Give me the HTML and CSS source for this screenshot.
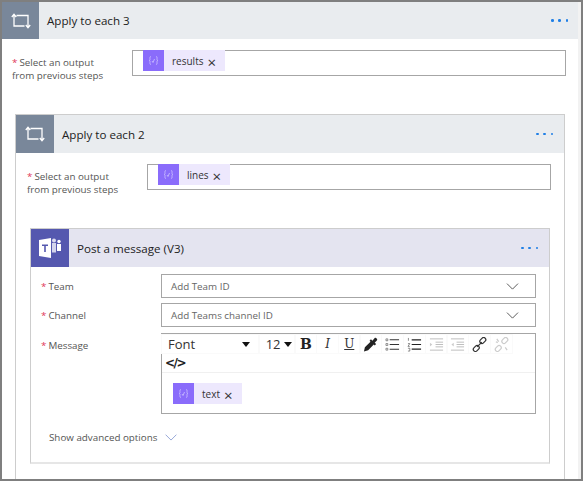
FILE: index.html
```html
<!DOCTYPE html>
<html lang="en">
<head>
<meta charset="utf-8">
<title>Apply to each</title>
<link rel="stylesheet" href="styles.css">
</head>
<body>
<svg class="defs" width="0" height="0" aria-hidden="true">
  <symbol id="loop" viewBox="0 0 20 16"><path d="M.8 4 3 1.200 5.200 4M3 1.500v11.500h10.500M5.500 2.500H17V14.500M14.800 12 17 14.800 19.200 12" fill="none" stroke="#fff" stroke-width="1.300"/></symbol>
  <symbol id="fx" viewBox="0 0 21 21"><path d="M8 6.500c-1.500 0-1 2-1 3s-1 1-1 1 1 0 1 1-.5 3 1 3M13 6.500c1.500 0 1 2 1 3s1 1 1 1-1 0-1 1 .5 3-1 3M9 11l1 1.500 1.500-3.500" fill="none" stroke="#cfc4ff" stroke-width=".8"/></symbol>
  <symbol id="chev" viewBox="0 0 14 8"><path d="M.7.700 7 7 13.300.700" fill="none" stroke="currentColor" stroke-width="1.100"/></symbol>
</svg>
<div class="frame">
  <div class="head head-outer">
    <div class="head-icon"><svg class="loop-icon"><use href="#loop"/></svg></div>
    <div class="head-title">Apply to each 3</div>
    <div class="dots"><i></i><i></i><i></i></div>
  </div>
  <div class="field-row row-outer">
    <div class="field-label"><span class="req">*</span>Select an output<br>from previous steps</div>
    <div class="token-input">
      <span class="token"><span class="token-icon"><svg class="fx-icon"><use href="#fx"/></svg></span><span class="token-text">results</span><span class="token-x">×</span></span>
    </div>
  </div>

  <section class="card-inner">
    <div class="head head-inner">
      <div class="head-icon"><svg class="loop-icon"><use href="#loop"/></svg></div>
      <div class="head-title">Apply to each 2</div>
      <div class="dots"><i></i><i></i><i></i></div>
    </div>
    <div class="field-row row-inner">
      <div class="field-label"><span class="req">*</span>Select an output<br>from previous steps</div>
      <div class="token-input">
        <span class="token"><span class="token-icon"><svg class="fx-icon"><use href="#fx"/></svg></span><span class="token-text">lines</span><span class="token-x">×</span></span>
      </div>
    </div>

    <section class="card-teams">
      <div class="head head-teams">
        <div class="head-icon teams-icon">
          <svg class="teams-svg" viewBox="0 0 24 24">
            <path d="M1 4 13 2v20L1 20z" fill="#fff"/>
            <path d="M4 8.500h6V10H7.800v6H6.200v-6H4z" fill="#5558af"/>
            <rect x="14" y="7" width="4" height="9.500" fill="#fff" opacity=".75"/>
            <circle cx="16" cy="4.500" r="2" fill="#fff" opacity=".8"/>
            <rect x="19" y="8" width="4" height="7" fill="#fff"/>
            <circle cx="21" cy="5.500" r="1.700" fill="#fff"/>
          </svg>
        </div>
        <div class="head-title">Post a message (V3)</div>
        <div class="dots"><i></i><i></i><i></i></div>
      </div>
      <div class="teams-body">
        <div class="param">
          <div class="param-label"><span class="req">*</span>Team</div>
          <div class="select"><span>Add Team ID</span><svg class="chev-icon"><use href="#chev"/></svg></div>
        </div>
        <div class="param">
          <div class="param-label"><span class="req">*</span>Channel</div>
          <div class="select"><span>Add Teams channel ID</span><svg class="chev-icon"><use href="#chev"/></svg></div>
        </div>
        <div class="param param-tall">
          <div class="param-label"><span class="req">*</span>Message</div>
          <div class="editor">
            <div class="toolbar">
              <div class="tb-row">
                <span class="tb-btn tb-font">Font<span class="caret"></span></span>
                <span class="tb-btn tb-size">12<span class="caret"></span></span>
                <span class="tb-btn tb-b">B</span>
                <span class="tb-btn tb-i">I</span>
                <span class="tb-btn tb-u">U</span>
                <span class="tb-btn">
                  <svg class="tb-icon" viewBox="0 0 16 16"><path d="M1 15.500 2 11l6-6-1-1 1.500-1.500 1.500 1.500L12.500 1c1-1 3.500 1.500 2.500 2.500L12.500 6l1.500 1.500L12.500 9l-1-1-6 6z" fill="#222"/></svg>
                </span>
                <span class="tb-btn">
                  <svg class="tb-icon" viewBox="0 0 16 16"><path d="M1 2h2v2H1zM1 7h2v2H1zM1 12h2v2H1z" fill="none" stroke="#444" stroke-width=".6"/><path d="M5 3h10M5 8h10M5 13h10" stroke="#333" stroke-width="1.100"/></svg>
                </span>
                <span class="tb-btn">
                  <svg class="tb-icon" viewBox="0 0 16 16"><path d="M1.500 1v3M1 7h2L1 10h2M1 12h2v3H1" fill="none" stroke="#555" stroke-width=".7"/><path d="M5 3h10M5 8h10M5 13h10" stroke="#222" stroke-width="1.300"/></svg>
                </span>
                <span class="tb-btn">
                  <svg class="tb-icon" viewBox="0 0 16 16"><path d="M1 2h14M7 5.500h8M7 8h8M7 10.500h8M1 14h14" stroke="#bbb"/><path d="M1 6v4l2.500-2z" fill="#ccc"/></svg>
                </span>
                <span class="tb-btn">
                  <svg class="tb-icon" viewBox="0 0 16 16"><path d="M1 2h14M7 5.500h8M7 8h8M7 10.500h8M1 14h14" stroke="#bbb"/><path d="M4 6v4L1.500 8z" fill="#ccc"/></svg>
                </span>
                <span class="tb-btn">
                  <svg class="tb-icon" viewBox="0 0 16 16"><g fill="none" stroke="#333" stroke-width="1.300"><rect x="8" y="1.500" width="7" height="4.500" rx="2.200" transform="rotate(-45 11.500 3.700)"/><rect x="1" y="10" width="7" height="4.500" rx="2.200" transform="rotate(-45 4.500 12.200)"/><path d="m5.500 10.500 5-5"/></g></svg>
                </span>
                <span class="tb-btn">
                  <svg class="tb-icon" viewBox="0 0 16 16"><g fill="none" stroke="#ccc" stroke-width="1.300"><rect x="8" y="1.500" width="7" height="4.500" rx="2.200" transform="rotate(-45 11.500 3.700)"/><rect x="1" y="10" width="7" height="4.500" rx="2.200" transform="rotate(-45 4.500 12.200)"/><path d="M3 2l2 3M2 5l2 1M12 11l2 3"/></g></svg>
                </span>
              </div>
              <div class="tb-code">&lt;/&gt;</div>
            </div>
            <div class="editor-body">
              <span class="token"><span class="token-icon"><svg class="fx-icon"><use href="#fx"/></svg></span><span class="token-text">text</span><span class="token-x">×</span></span>
            </div>
          </div>
        </div>
        <div class="advanced">Show advanced options<svg class="adv-chev"><use href="#chev"/></svg></div>
      </div>
    </section>
  </section>
</div>
</body>
</html>
```
FILE: styles.css
```css
* { box-sizing: border-box; }
html, body { margin: 0; padding: 0; background: #fff; }
.defs { position: absolute; }
.frame {
  width: 583px;
  height: 481px;
  border: 2px solid #7f7f7f;
  padding-right: 1px;
  overflow: hidden;
  font-family: "Open Sans", "Liberation Sans", sans-serif;
  font-size: 9.8px;
  color: #444;
  background: #fff;
  box-shadow: inset -3px 0 0 #f2f2f2;
}
.head { display: flex; align-items: center; height: 37px; background: #e9ecef; }
.head-icon {
  width: 37px; height: 100%;
  background: #79879a;
  display: flex; align-items: center; justify-content: center;
  flex: none;
}
.head-title { flex: 1; padding-left: 8px; font-size: 11.6px; color: #222; }
.dots { display: flex; gap: 4.700px; flex: none; padding-right: 10px; }
.dots i { width: 2.500px; height: 2.500px; border-radius: 50%; background: #1f7fe6; display: block; }
.loop-icon { width: 20px; height: 16px; }
.fx-icon { width: 21px; height: 21px; display: block; }
.head-outer { margin-right: 2px; }
.field-row { display: flex; }
.row-outer { padding: 11px 14px 0 10px; }
.row-inner { padding: 11px 13px 0 11px; }
.field-label { width: 120px; flex: none; line-height: 13px; padding-top: 6px; color: #555; }
.req { color: #e0385a; margin-right: 2px; }
.token-input {
  flex: 1; height: 26px;
  border: 1px solid #a6a6a6;
  padding-left: 10px;
  background: #fff;
}
.token {
  display: inline-flex; align-items: center; height: 21px;
  margin-top: -1px;
  background: #ede8fd;
  color: #333;
  vertical-align: top;
}
.token-icon { width: 21px; height: 21px; background: #8a6cfb; flex: none; }
.token-text { margin: 1px 0 0 8px; font-size: 10px; }
.token-x { margin: 2px 9px 0 4px; font-size: 15px; line-height: 12px; color: #333; }
.card-inner {
  margin: 32px 15px 0 13px;
  height: 400px;
  border: 1px solid #cdcdcd;
  border-bottom: 0;
}
.head-inner { height: 38px; }
.head-inner .head-icon { width: 38px; }
.head-inner .dots, .head-teams .dots { padding-right: 11px; }
.card-teams {
  margin: 32px 14px 0 14px;
  height: 236px;
  border: 1px solid #cdcdcd;
  border-bottom: 2px solid #e6e6e6;
}
.head-teams { height: 38px; background: #e4e4f0; }
.head-teams .head-icon { width: 38px; }
.teams-icon { background: #5558af; }
.teams-svg { width: 24px; height: 24px; }
.teams-body { padding: 7px 13px 0 10px; }
.param { display: flex; margin-bottom: 5px; }
.param-label { width: 120px; flex: none; padding-top: 6px; line-height: 13px; color: #555; }
.param-tall .param-label { padding-top: 7px; }
.select {
  flex: 1; height: 24px;
  border: 1px solid #a6a6a6;
  display: flex; align-items: center; justify-content: space-between;
  padding: 0 16px 0 9px;
  color: #666;
}
.chev-icon { width: 13px; height: 7px; color: #555; }
.editor { flex: 1; height: 81px; border: 1px solid #a6a6a6; margin-top: 1px; }
.toolbar { height: 39px; border-bottom: 1px solid #f0f0f0; }
.tb-row { display: flex; gap: .7px; padding-top: 1px; height: 20px; }
.tb-btn { display: flex; align-items: center; justify-content: center; width: 21px; height: 18px; flex: none; box-shadow: 0 0 0 1px #fafafa; }
.tb-icon { width: 15px; height: 15px; }
.tb-font { width: 96px; justify-content: space-between; padding: 0 8px 0 6px; font-size: 13px; color: #333; margin-right: 1px; }
.tb-size { width: 35px; justify-content: space-between; padding: 0 3px 0 6px; font-size: 13px; color: #333; }
.caret { width: 0; height: 0; border: 4.500px solid transparent; border-top: 5px solid #111; border-bottom: 0; }
.tb-b { font-family: "DejaVu Serif", serif; font-weight: 700; font-size: 14px; color: #222; }
.tb-i { font-family: "DejaVu Serif", serif; font-style: italic; font-size: 12px; color: #333; }
.tb-u { font-family: "DejaVu Serif", serif; text-decoration: underline; font-size: 12px; color: #333; }
.tb-code { font-size: 12px; font-weight: 700; letter-spacing: -1.500px; color: #222; padding: 1px 0 0 3px; line-height: 16px; font-family: "DejaVu Sans", sans-serif; }
.editor-body { padding: 10px 0 0 11px; }
.editor-body .token { margin-top: 0; }
.advanced { display: flex; align-items: center; gap: 8px; padding: 12px 0 0 8px; color: #555; }
.adv-chev { width: 12px; height: 7px; color: #93a4d6; }
```
